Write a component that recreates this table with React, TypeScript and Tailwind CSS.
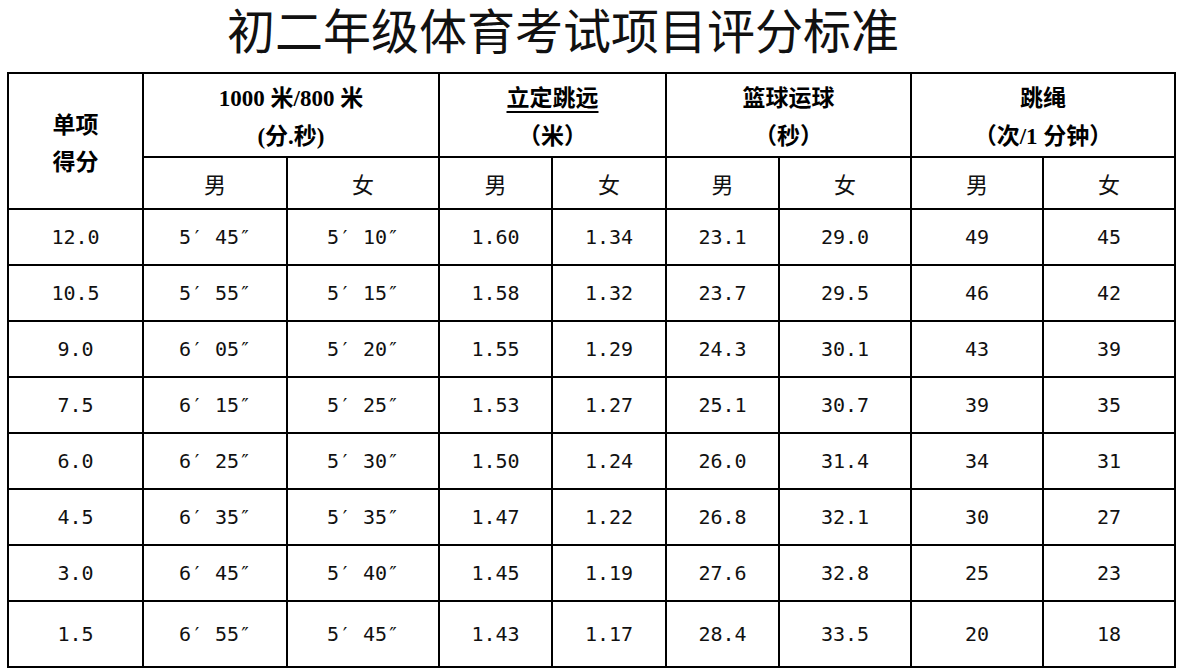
import React from "react";

const rows: string[][] = [
  ["12.0", "5′ 45″", "5′ 10″", "1.60", "1.34", "23.1", "29.0", "49", "45"],
  ["10.5", "5′ 55″", "5′ 15″", "1.58", "1.32", "23.7", "29.5", "46", "42"],
  ["9.0", "6′ 05″", "5′ 20″", "1.55", "1.29", "24.3", "30.1", "43", "39"],
  ["7.5", "6′ 15″", "5′ 25″", "1.53", "1.27", "25.1", "30.7", "39", "35"],
  ["6.0", "6′ 25″", "5′ 30″", "1.50", "1.24", "26.0", "31.4", "34", "31"],
  ["4.5", "6′ 35″", "5′ 35″", "1.47", "1.22", "26.8", "32.1", "30", "27"],
  ["3.0", "6′ 45″", "5′ 40″", "1.45", "1.19", "27.6", "32.8", "25", "23"],
  ["1.5", "6′ 55″", "5′ 45″", "1.43", "1.17", "28.4", "33.5", "20", "18"],
];

const cell = "border-r-2 border-b-2 border-black flex items-center justify-center";
const headFont = "font-['Liberation_Serif','Noto_Sans_CJK_SC',serif] font-bold text-[23px] text-center text-black pt-[6px]";
const subFont = "font-['Noto_Sans_CJK_SC',sans-serif] text-[22px] text-[#111]";
const dataFont = "font-['DejaVu_Sans_Mono','Noto_Sans_CJK_SC',monospace] text-[20px] text-[#111]";

const Head: React.FC<{ top: React.ReactNode; bottom: string; span: string; lh: string }> = ({
  top,
  bottom,
  span,
  lh,
}) => (
  <div className={`${cell} ${span} ${headFont}`}>
    <div className={lh}>
      <div>{top}</div>
      <div>{bottom}</div>
    </div>
  </div>
);

const App: React.FC = () => {
  return (
    <div className="w-[1180px] h-[670px] bg-white overflow-hidden">
      {/* 标题 */}
      <div className="h-[72px] pl-[227px] font-['Noto_Sans_CJK_SC',sans-serif] text-[48px] leading-[56px] text-[#111]">
        初二年级体育考试项目评分标准
      </div>

      {/* 表格 */}
      <div className="ml-[7px] w-fit grid grid-cols-[135px_144px_152px_113px_114px_113px_132px_132px_132px] grid-rows-[84px_52px_repeat(7,56px)_66px] border-t-2 border-l-2 border-black">
        <Head top="单项" bottom="得分" span="row-span-2" lh="leading-[37px]" />
        <Head top="1000 米/800 米" bottom="(分.秒)" span="col-span-2" lh="leading-[38px]" />
        <Head
          top={<span className="underline underline-offset-[5px] decoration-2">立定跳远</span>}
          bottom="（米）"
          span="col-span-2"
          lh="leading-[38px]"
        />
        <Head top="篮球运球" bottom="（秒）" span="col-span-2" lh="leading-[38px]" />
        <Head top="跳绳" bottom="（次/1 分钟）" span="col-span-2" lh="leading-[38px]" />

        {["男", "女", "男", "女", "男", "女", "男", "女"].map((g, i) => (
          <div key={i} className={`${cell} ${subFont}`}>
            {g}
          </div>
        ))}

        {rows.map((row, r) =>
          row.map((v, c) => (
            <div key={`${r}-${c}`} className={`${cell} ${dataFont}`}>
              {v}
            </div>
          ))
        )}
      </div>
    </div>
  );
};

export default App;
